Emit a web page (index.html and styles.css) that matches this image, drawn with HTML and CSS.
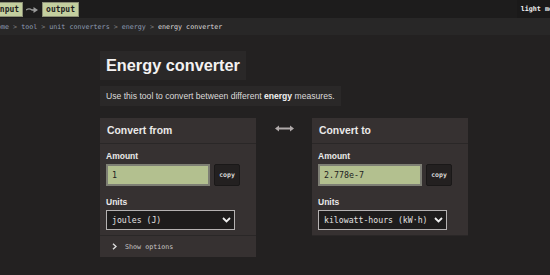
FILE: index.html
```html
<!DOCTYPE html>
<html lang="en">
<head>
    <meta charset="UTF-8">
    <meta name="viewport" content="width=device-width, initial-scale=1.0">
    <title>Energy converter</title>
    <link rel="stylesheet" href="styles.css">
</head>
<body>
    <header class="topbar">
        <div class="logo">
            <span class="logo-box logo-in">input</span>
            <svg class="logo-arrow" width="13" height="9" viewBox="0 0 13 9">
                <path d="M0 5 C2 3.5 4 3.5 6 5 L8 5" fill="none" stroke="#9a9a9a" stroke-width="1.4"/>
                <path d="M7.5 2 L12 5 L7.5 8 Z" fill="#9a9a9a"/>
            </svg>
            <span class="logo-box">output</span>
        </div>
        <button class="mode-btn">light mode</button>
    </header>

    <nav class="crumbs">
        <a href="#">home</a><span class="sep">&gt;</span>
        <a href="#">tool</a><span class="sep">&gt;</span>
        <a href="#">unit converters</a><span class="sep">&gt;</span>
        <a href="#">energy</a><span class="sep">&gt;</span>
        <span class="current">energy converter</span>
    </nav>

    <main class="page">
        <h1 class="title"><b>Energy</b> converter</h1>
        <p class="intro">Use this tool to convert between different <b>energy</b> measures.</p>

        <div class="converter">
            <section class="card">
                <h2 class="card-head">Convert from</h2>
                <div class="card-body">
                    <label class="field-label">Amount</label>
                    <div class="amount-row">
                        <input class="amount" type="text" value="1">
                        <button class="copy">copy</button>
                    </div>
                    <label class="field-label">Units</label>
                    <div class="select">
                        <span>joules (J)</span>
                        <svg width="9" height="6" viewBox="0 0 9 6"><path d="M1 1 L4.5 4.5 L8 1" fill="none" stroke="#eee" stroke-width="1.8"/></svg>
                    </div>
                </div>
                <div class="options">
                    <svg width="5" height="7" viewBox="0 0 5 7"><path d="M1 0.8 L4 3.5 L1 6.2" fill="none" stroke="#ddd" stroke-width="1.4"/></svg>
                    <span>Show options</span>
                </div>
            </section>

            <div class="swap">
                <svg width="19" height="7" viewBox="0 0 19 7">
                    <path d="M3 3.5 L16 3.5" stroke="#b0aaaa" stroke-width="2"/>
                    <path d="M0 3.5 L4 0.5 L4 6.5 Z M19 3.5 L15 0.5 L15 6.5 Z" fill="#b0aaaa"/>
                </svg>
            </div>

            <section class="card">
                <h2 class="card-head">Convert to</h2>
                <div class="card-body">
                    <label class="field-label">Amount</label>
                    <div class="amount-row">
                        <input class="amount" type="text" value="2.778e-7">
                        <button class="copy">copy</button>
                    </div>
                    <label class="field-label">Units</label>
                    <div class="select">
                        <span>kilowatt-hours (kW·h)</span>
                        <svg width="9" height="6" viewBox="0 0 9 6"><path d="M1 1 L4.5 4.5 L8 1" fill="none" stroke="#eee" stroke-width="1.8"/></svg>
                    </div>
                </div>
            </section>
        </div>
    </main>
</body>
</html>
```

FILE: styles.css
```css
body {
    margin: 0;
    padding: 0;
    background-color: #232121;
    color: #e8e6e6;
    font-family: 'Liberation Sans', Arial, sans-serif;
    overflow: hidden;
}
.topbar {
    height: 18px;
    background-color: #1d1c1c;
    display: flex;
    justify-content: space-between;
    align-items: center;
}
.logo {
    display: flex;
    align-items: center;
    gap: 2px;
    margin-left: -9px;
}
.logo-box {
    font-family: 'DejaVu Sans Mono', monospace;
    font-weight: bold;
    font-size: 8px;
    color: #1e1e1e;
    background-color: #c4cf9f;
    border: 1px solid #8d9077;
    padding: 1px 3px;
    line-height: 11px;
}
.logo-arrow {
    margin: 0 1px;
}
.mode-btn {
    font-family: 'DejaVu Sans Mono', monospace;
    font-weight: bold;
    font-size: 6.7px;
    color: #f2f2f2;
    background-color: #1a1919;
    border: none;
    height: 18px;
    padding: 0 4px;
    margin-right: -15px;
    white-space: nowrap;
}
.crumbs {
    height: 17px;
    background-color: #282727;
    display: flex;
    align-items: center;
    margin-left: -7px;
    font-family: 'DejaVu Sans Mono', monospace;
    font-size: 6.7px;
    white-space: pre;
}
.crumbs a {
    color: #8e9cb3;
    text-decoration: none;
}
.crumbs .sep {
    color: #8a8888;
    padding: 0 4px;
}
.crumbs .current {
    color: #dddada;
}
.page {
    padding: 16px 0 0 100px;
}
.title {
    width: fit-content;
    margin: 0;
    background-color: #2a2828;
    font-size: 16.3px;
    font-weight: bold;
    color: #f4f2f2;
    padding: 5px 6px 6px;
    line-height: 18px;
}
.intro {
    width: fit-content;
    margin: 6px 0 0;
    background-color: #2a2828;
    font-size: 8.6px;
    color: #dcdada;
    padding: 5px 6px;
    line-height: 10px;
}
.intro b {
    color: #f2f2f2;
}
.converter {
    display: flex;
    align-items: flex-start;
    margin-top: 12px;
}
.card {
    width: 156px;
    background-color: #363131;
}
.card-head {
    margin: 0;
    height: 25px;
    padding: 0 7px;
    display: flex;
    align-items: center;
    font-size: 10.4px;
    font-weight: bold;
    color: #ebe9e9;
    border-bottom: 1px solid #2a2727;
}
.card-body {
    padding: 7px 6px 5px;
    border-bottom: 1px solid #2a2727;
}
.field-label {
    display: block;
    font-size: 8.5px;
    font-weight: bold;
    color: #ebe9e9;
    line-height: 10px;
    margin-bottom: 3px;
}
.amount-row {
    display: flex;
    align-items: center;
    gap: 4px;
    margin-bottom: 11px;
}
.amount {
    width: 104px;
    height: 22px;
    box-sizing: border-box;
    background-color: #b3c08f;
    border: 2px solid #7e7f74;
    font-family: 'DejaVu Sans Mono', monospace;
    font-size: 8.3px;
    color: #222;
    padding: 0 4px;
    outline: none;
}
.copy {
    width: 26px;
    height: 22px;
    box-sizing: border-box;
    background-color: #232020;
    border: 1px solid #1a1818;
    border-radius: 2px;
    font-family: 'DejaVu Sans Mono', monospace;
    font-weight: bold;
    font-size: 6.5px;
    color: #d8d6d6;
    padding: 0;
}
.select {
    width: 129px;
    height: 20px;
    box-sizing: border-box;
    background-color: #1e1c1c;
    border: 1px solid #b5b2b2;
    display: flex;
    align-items: center;
    justify-content: space-between;
    padding: 0 3px 0 5px;
    font-family: 'DejaVu Sans Mono', monospace;
    font-size: 8.2px;
    color: #e4e2e2;
    white-space: nowrap;
}
.options {
    height: 21px;
    display: flex;
    align-items: center;
    gap: 8px;
    padding-left: 12px;
    font-family: 'DejaVu Sans Mono', monospace;
    font-size: 6.7px;
    color: #c8c6c6;
}
.swap {
    width: 56px;
    height: 20px;
    display: flex;
    justify-content: center;
    align-items: center;
}
```
